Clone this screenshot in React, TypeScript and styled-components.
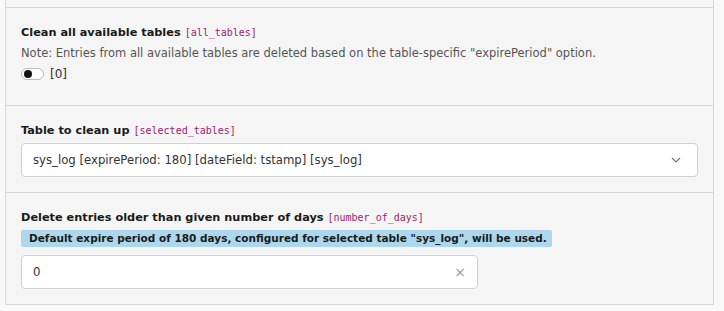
import React from "react";
import styled, { createGlobalStyle } from "styled-components";

const Global = createGlobalStyle`
  html, body { margin: 0; padding: 0; background: #f9f9f9; }
  body { font-family: "DejaVu Sans", Verdana, sans-serif; font-size: 11.5px; color: #333; }
`;

const Page = styled.div`
  padding: 0 10px 6px 5px;
`;

const Panel = styled.div`
  background: #f5f5f5;
  border-left: 1px solid #d7d7d7;
  border-right: 1px solid #d7d7d7;
  border-bottom: 1px solid #d7d7d7;
`;

const Prev = styled.div`
  height: 7px;
  border-bottom: 1px solid #d7d7d7;
`;

const Section = styled.div<{ $last?: boolean }>`
  padding: 16px 15px 15px 15px;
  border-bottom: ${(p) => (p.$last ? "none" : "1px solid #d7d7d7")};
`;

const Title = styled.div`
  font-weight: bold;
  font-size: 11.3px;
  line-height: 18px;
  color: #1a1a1a;
`;

const Code = styled.code`
  font-family: "DejaVu Sans Mono", monospace;
  font-weight: normal;
  font-size: 10px;
  color: #a0216f;
  margin-left: 4px;
`;

const Note = styled.div`
  color: #555;
  line-height: 18px;
  margin-top: 2px;
`;

const ToggleRow = styled.label`
  display: flex;
  align-items: center;
  gap: 6px;
  margin-top: 3px;
  margin-bottom: 7px;
  line-height: 18px;
  color: #333;
  font-size: 12px;
`;

const Toggle = styled.span`
  position: relative;
  width: 21px;
  height: 10px;
  border: 1px solid #bbb;
  border-radius: 6px;
  background: #fff;
  &::after {
    content: "";
    position: absolute;
    left: 2px;
    top: 1px;
    width: 8px;
    height: 8px;
    border-radius: 50%;
    background: #111;
  }
`;

const Box = styled.div<{ $width?: string; $mt?: number; $pr?: number }>`
  display: flex;
  align-items: center;
  justify-content: space-between;
  box-sizing: border-box;
  height: 34px;
  width: ${(p) => p.$width ?? "100%"};
  margin-top: ${(p) => p.$mt ?? 3}px;
  padding: 0 ${(p) => p.$pr ?? 16}px 0 11px;
  background: #fff;
  border: 1px solid #d0d0d0;
  border-radius: 4px;
  font-size: 11.7px;
  color: #333;
`;

const Badge = styled.span`
  display: inline-block;
  margin-top: 3px;
  padding: 0 5px 0 8px;
  line-height: 17px;
  background: #add7ec;
  border-radius: 2px;
  font-weight: bold;
  font-size: 10.5px;
  color: #1a1a1a;
`;

const Clear = styled.span`
  color: #999;
  font-size: 14px;
  line-height: 1;
`;

export default function App() {
  return (
    <>
      <Global />
      <Page>
        <Panel>
          <Prev />
          <Section>
            <Title>
              Clean all available tables<Code>[all_tables]</Code>
            </Title>
            <Note>
              Note: Entries from all available tables are deleted based on the
              table-specific "expirePeriod" option.
            </Note>
            <ToggleRow>
              <Toggle />
              [0]
            </ToggleRow>
          </Section>
          <Section>
            <Title>
              Table to clean up<Code>[selected_tables]</Code>
            </Title>
            <Box>
              <span>sys_log [expirePeriod: 180] [dateField: tstamp] [sys_log]</span>
              <svg width="10" height="6" viewBox="0 0 10 6">
                <path d="M1 1l4 4 4-4" fill="none" stroke="#777" strokeWidth="1.2" />
              </svg>
            </Box>
          </Section>
          <Section $last>
            <Title>
              Delete entries older than given number of days
              <Code>[number_of_days]</Code>
            </Title>
            <Badge>
              Default expire period of 180 days, configured for selected table
              "sys_log", will be used.
            </Badge>
            <Box $width="457px" $mt={8} $pr={11}>
              <span>0</span>
              <Clear>×</Clear>
            </Box>
          </Section>
        </Panel>
      </Page>
    </>
  );
}
